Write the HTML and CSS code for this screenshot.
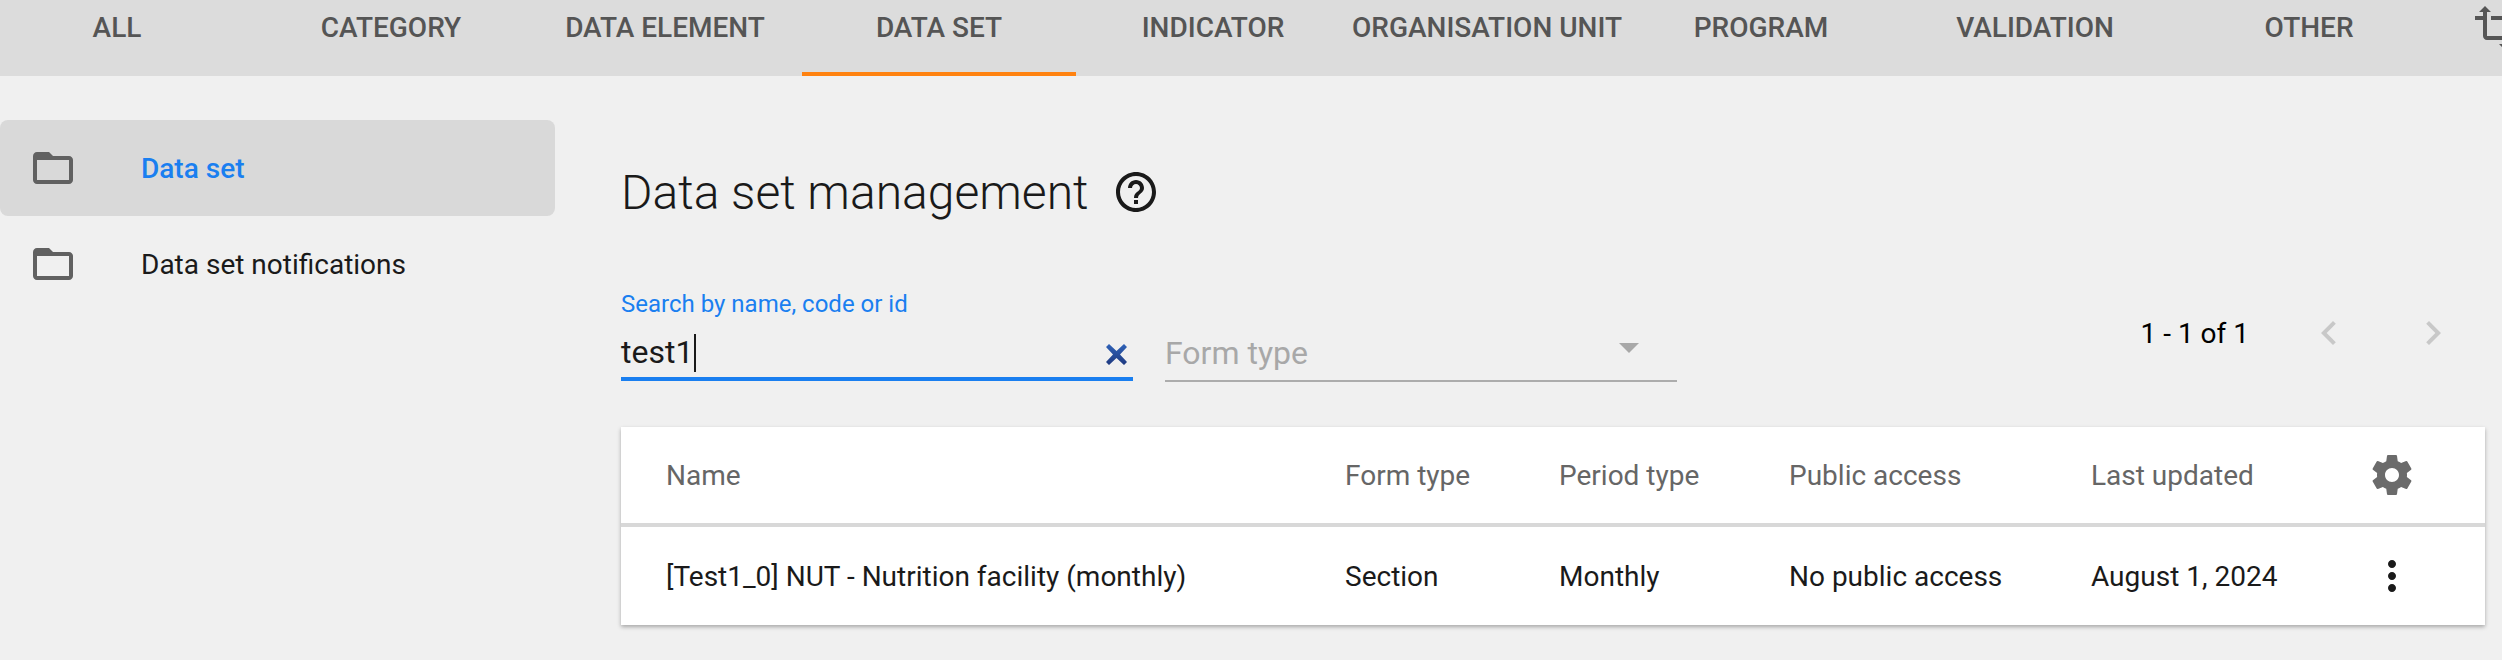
FILE: index.html
```html
<!DOCTYPE html>
<html lang="en">
  <head>
    <meta charset="UTF-8" />
    <title>Data set management</title>
    <link rel="stylesheet" href="styles.css">
  </head>

  <body>
    <!-- section tabs, scrolled a little to the right -->
    <nav class="tabs">
      <div class="tab">ALL</div>
      <div class="tab">CATEGORY</div>
      <div class="tab">DATA ELEMENT</div>
      <div class="tab tab-active">DATA SET</div>
      <div class="tab">INDICATOR</div>
      <div class="tab">ORGANISATION UNIT</div>
      <div class="tab">PROGRAM</div>
      <div class="tab">VALIDATION</div>
      <div class="tab">OTHER</div>
      <div class="tab-icon">
        <svg class="icon" viewBox="0 0 24 24"><path d="M22 18v-2H8V4h2L7 1 4 4h2v2H2v2h4v8c0 1.1.9 2 2 2h8v2h-2l3 3 3-3h-2v-2h4zM10 8h6v6h2V8c0-1.1-.9-2-2-2h-6v2z"/></svg>
      </div>
    </nav>

    <div class="layout">
      <aside class="sidebar">
        <div class="side-item side-item-active">
          <svg class="icon folder" viewBox="0 0 24 24"><path d="M20 6h-8l-2-2H4c-1.1 0-1.99.9-1.99 2L2 18c0 1.1.9 2 2 2h16c1.1 0 2-.9 2-2V8c0-1.1-.9-2-2-2zm0 12H4V8h16v10z"/></svg>
          <span>Data set</span>
        </div>
        <div class="side-item">
          <svg class="icon folder" viewBox="0 0 24 24"><path d="M20 6h-8l-2-2H4c-1.1 0-1.99.9-1.99 2L2 18c0 1.1.9 2 2 2h16c1.1 0 2-.9 2-2V8c0-1.1-.9-2-2-2zm0 12H4V8h16v10z"/></svg>
          <span>Data set notifications</span>
        </div>
      </aside>

      <main class="main">
        <div class="heading">
          <h1>Data set management</h1>
          <svg class="icon help" viewBox="0 0 24 24"><path d="M11 18h2v-2h-2v2zm1-16C6.48 2 2 6.48 2 12s4.48 10 10 10 10-4.48 10-10S17.52 2 12 2zm0 18c-4.41 0-8-3.59-8-8s3.59-8 8-8 8 3.59 8 8-3.59 8-8 8zm0-14c-2.21 0-4 1.79-4 4h2c0-1.1.9-2 2-2s2 .9 2 2c0 2-3 1.75-3 5h2c0-2.25 3-2.5 3-5 0-2.21-1.79-4-4-4z"/></svg>
        </div>

        <div class="filters">
          <div class="field field-search">
            <label>Search by name, code or id</label>
            <div class="field-value">
              <span class="typed">test1</span>
              <svg class="clear" viewBox="0 0 21 21">
                <defs>
                  <linearGradient id="cleargrad" x1="0" y1="0" x2="0" y2="1">
                    <stop offset="0" stop-color="#2f62b8" />
                    <stop offset="1" stop-color="#1f3a80" />
                  </linearGradient>
                </defs>
                <path d="M3 0 10.5 7 18 0 21 3 14 10.5 21 18 18 21 10.5 14 3 21 0 18 7 10.5 0 3z" fill="url(#cleargrad)"/>
              </svg>
            </div>
          </div>
          <div class="field field-select">
            <div class="field-value">
              <span>Form type</span>
              <span class="arrow"></span>
            </div>
          </div>
          <div class="pager">
            <span class="pager-text">1 - 1 of 1</span>
            <svg class="icon pager-left" viewBox="0 0 24 24"><path d="M15.41 7.41L14 6l-6 6 6 6 1.41-1.41L10.83 12z"/></svg>
            <svg class="icon pager-right" viewBox="0 0 24 24"><path d="M10 6L8.59 7.41 13.17 12l-4.58 4.59L10 18l6-6z"/></svg>
          </div>
        </div>

        <div class="card">
          <div class="row row-head">
            <div>Name</div>
            <div>Form type</div>
            <div>Period type</div>
            <div>Public access</div>
            <div>Last updated</div>
            <svg class="icon gear" viewBox="0 0 24 24"><path d="M19.43 12.98c.04-.32.07-.64.07-.98s-.03-.66-.07-.98l2.11-1.65c.19-.15.24-.42.12-.64l-2-3.46c-.12-.22-.39-.3-.61-.22l-2.49 1c-.52-.4-1.08-.73-1.69-.98l-.38-2.65C14.46 2.18 14.25 2 14 2h-4c-.25 0-.46.18-.49.42l-.38 2.65c-.61.25-1.17.59-1.69.98l-2.49-1c-.23-.09-.49 0-.61.22l-2 3.46c-.13.22-.07.49.12.64l2.11 1.65c-.04.32-.07.65-.07.98s.03.66.07.98l-2.11 1.65c-.19.15-.24.42-.12.64l2 3.46c.12.22.39.3.61.22l2.49-1c.52.4 1.08.73 1.69.98l.38 2.65c.03.24.24.42.49.42h4c.25 0 .46-.18.49-.42l.38-2.65c.61-.25 1.17-.59 1.69-.98l2.49 1c.23.09.49 0 .61-.22l2-3.46c.12-.22.07-.49-.12-.64l-2.11-1.65zM12 15.5c-1.93 0-3.5-1.57-3.5-3.5s1.57-3.5 3.5-3.5 3.5 1.57 3.5 3.5-1.57 3.5-3.5 3.5z"/></svg>
          </div>
          <div class="row">
            <div>[Test1_0] NUT - Nutrition facility (monthly)</div>
            <div>Section</div>
            <div>Monthly</div>
            <div>No public access</div>
            <div>August 1, 2024</div>
            <svg class="icon dots" viewBox="0 0 24 24"><path d="M12 8c1.1 0 2-.9 2-2s-.9-2-2-2-2 .9-2 2 .9 2 2 2zm0 2c-1.1 0-2 .9-2 2s.9 2 2 2 2-.9 2-2-.9-2-2-2zm0 6c-1.1 0-2 .9-2 2s.9 2 2 2 2-.9 2-2-.9-2-2-2z"/></svg>
          </div>
        </div>
      </main>
    </div>
  </body>
</html>
```

FILE: styles.css
```css
html,
body {
  margin: 0;
  height: 660px;
  overflow: hidden;
}
body {
  background-color: #f0f0f0;
  font-family: Roboto, sans-serif;
  color: #1a1a1a;
}
.icon {
  display: block;
  flex: none;
  width: 48px;
  height: 48px;
  fill: currentColor;
}

/* tabs */
.tabs {
  display: flex;
  height: 76px;
  margin-left: -20px;
  background-color: #dcdcdc;
  color: #555555;
  font-size: 28px;
  font-weight: 500;
}
.tab {
  flex: none;
  box-sizing: border-box;
  width: 274px;
  height: 76px;
  padding-top: 13px;
  line-height: 30px;
  text-align: center;
}
.tab-active {
  border-bottom: 4px solid #ff8210;
}
.tab-icon {
  flex: none;
  padding: 4px 0 0 25px;
}

/* sidebar */
.layout {
  display: flex;
}
.sidebar {
  flex: none;
  width: 555px;
  margin-top: 44px;
}
.side-item {
  display: flex;
  align-items: center;
  height: 96px;
  font-size: 28px;
}
.side-item span {
  margin-left: 64px;
}
.side-item-active {
  background-color: #d9d9d9;
  border-radius: 8px;
  color: #1a7ff0;
  font-weight: 500;
}
.folder {
  margin-left: 29px;
  color: #616161;
}

/* main */
.main {
  flex: 1;
  margin-left: 66px;
  margin-right: 17px;
}
.heading {
  display: flex;
  align-items: center;
  height: 48px;
  margin-top: 92px;
}
.heading h1 {
  margin: 0;
  font-size: 48px;
  font-weight: 300;
}
.help {
  margin-left: 24px;
}

/* filters */
.filters {
  display: flex;
  align-items: flex-end;
  height: 165px;
}
.field {
  box-sizing: border-box;
  width: 512px;
}
.field label {
  display: block;
  margin-bottom: 10px;
  color: #1a7ff0;
  font-size: 24px;
  line-height: 30px;
}
.field-value {
  display: flex;
  align-items: center;
  justify-content: space-between;
  box-sizing: border-box;
  height: 48px;
  font-size: 32px;
}
.field-search {
  border-bottom: 4px solid #1a7ff0;
}
.field-select {
  margin-left: 32px;
  margin-bottom: -1px;
  border-bottom: 2px solid #acacac;
  color: #a8a8a8;
}
.field-select .field-value {
  padding-bottom: 6px;
}
.typed {
  padding-right: 1px;
  padding-bottom: 2px;
  border-right: 2px solid #1a1a1a;
  line-height: 36px;
}
.clear {
  width: 21px;
  height: 21px;
  margin-top: 3px;
  margin-right: 6px;
}
.arrow {
  width: 0;
  height: 0;
  margin: 0 38px 10px 0;
  border-top: 10px solid #a8a8a8;
  border-left: 10px solid transparent;
  border-right: 10px solid transparent;
}
.pager {
  display: flex;
  align-items: center;
  align-self: flex-end;
  height: 48px;
  margin-left: auto;
  margin-bottom: 24px;
  color: #000000;
  font-size: 28px;
}
.pager-left,
.pager-right {
  color: #c8c8c8;
}
.pager-left {
  margin-left: 56px;
}
.pager-right {
  margin-left: 56px;
  margin-right: 28px;
}

/* table */
.card {
  margin-top: 46px;
  background-color: #ffffff;
  box-shadow: 0 2px 4px rgba(0, 0, 0, 0.3);
  font-size: 28px;
}
.row {
  display: grid;
  grid-template-columns: 679px 214px 230px 302px 277px 48px;
  align-items: center;
  height: 98px;
  padding-left: 45px;
}
.row-head {
  height: 100px;
  box-sizing: border-box;
  border-bottom: 4px solid #d8d8d8;
  color: #666666;
}
.gear {
  color: #6b6b6b;
}
```
